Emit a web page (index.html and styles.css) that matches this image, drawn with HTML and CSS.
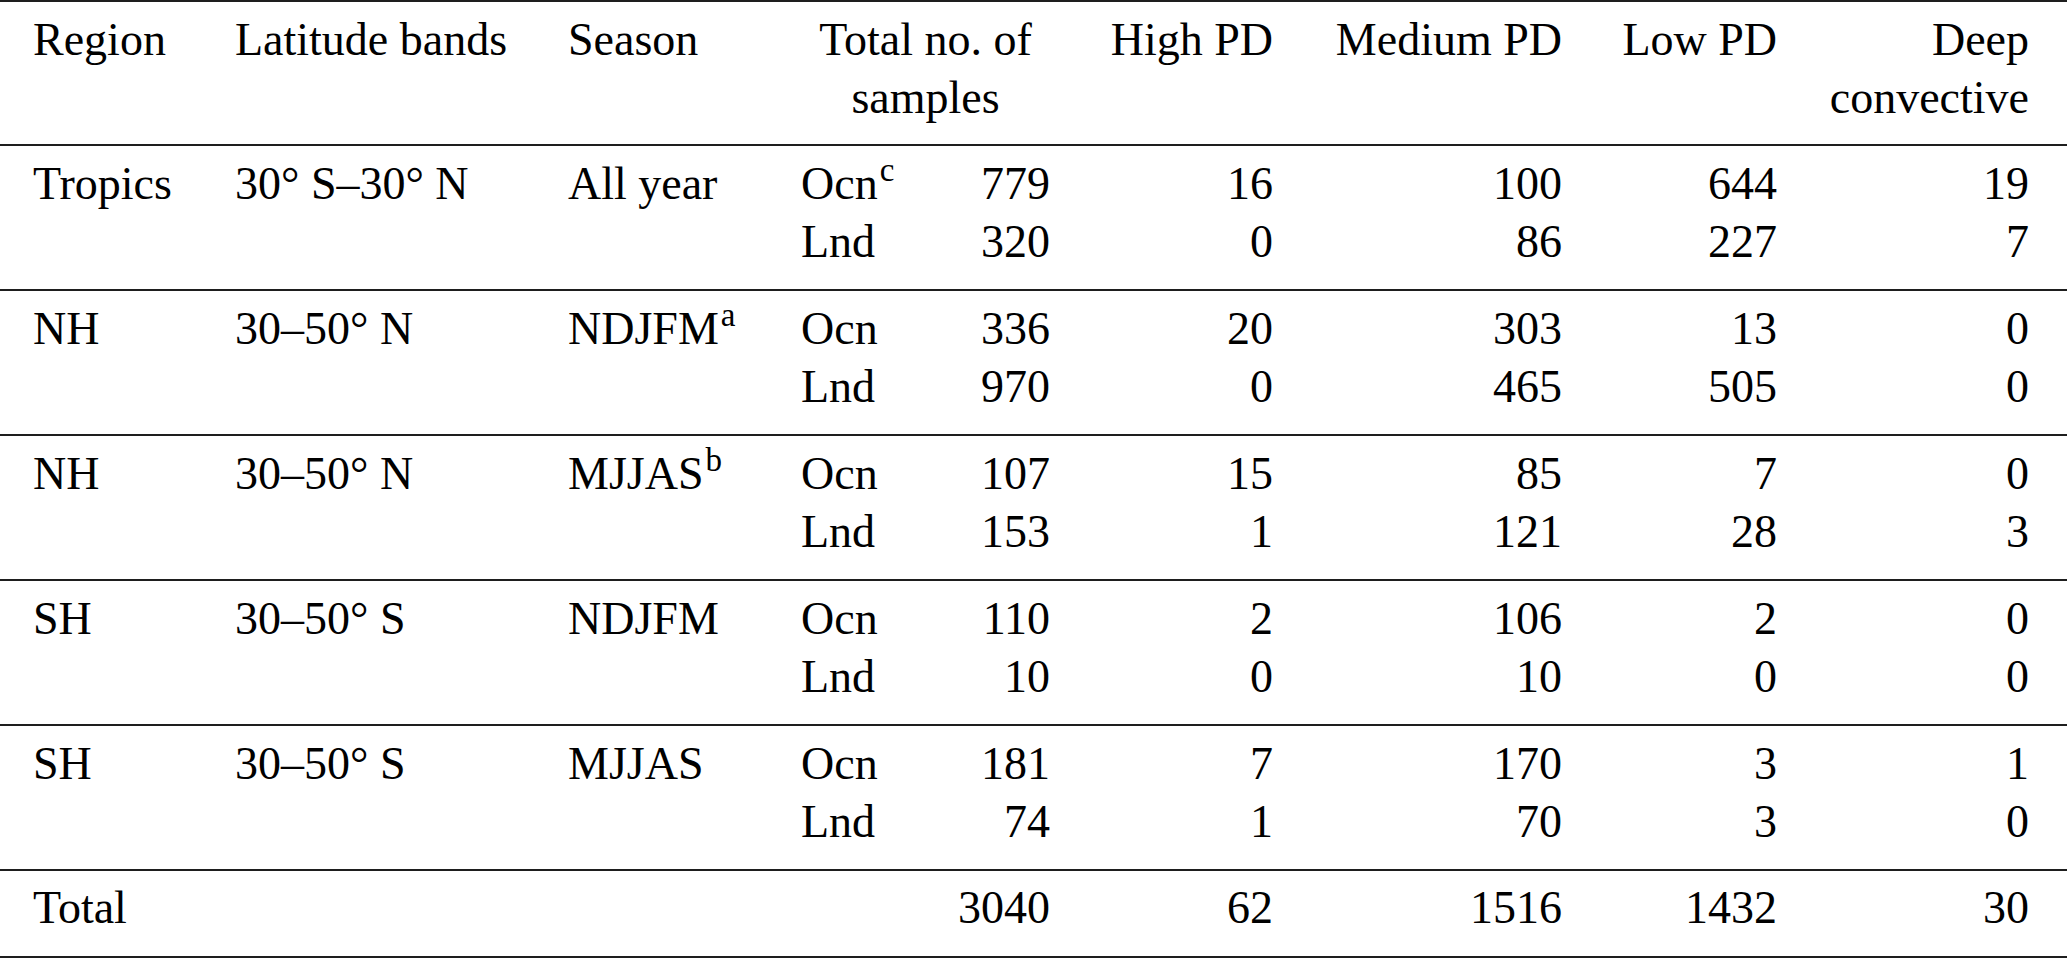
FILE: index.html
```html
<!DOCTYPE html>
<html lang="en">
<head>
<meta charset="utf-8">
<title>Table</title>
<link rel="stylesheet" href="styles.css">
</head>
<body>
<div class="table">
  <div class="group head">
    <div class="cell first">Region</div>
    <div class="cell">Latitude bands</div>
    <div class="cell">Season</div>
    <div class="cell span2 center">Total no. of<br>samples</div>
    <div class="cell num">High PD</div>
    <div class="cell num">Medium PD</div>
    <div class="cell num">Low PD</div>
    <div class="cell num last">Deep<br>convective</div>
  </div>

  <div class="group">
    <div class="cell first">Tropics</div>
    <div class="cell">30° S–30° N</div>
    <div class="cell">All year</div>
    <div class="cell">Ocn<span class="sup">c</span></div>
    <div class="cell num">779</div>
    <div class="cell num">16</div>
    <div class="cell num">100</div>
    <div class="cell num">644</div>
    <div class="cell num last">19</div>
    <div class="cell first"></div>
    <div class="cell"></div>
    <div class="cell"></div>
    <div class="cell">Lnd</div>
    <div class="cell num">320</div>
    <div class="cell num">0</div>
    <div class="cell num">86</div>
    <div class="cell num">227</div>
    <div class="cell num last">7</div>
  </div>

  <div class="group">
    <div class="cell first">NH</div>
    <div class="cell">30–50° N</div>
    <div class="cell">NDJFM<span class="sup">a</span></div>
    <div class="cell">Ocn</div>
    <div class="cell num">336</div>
    <div class="cell num">20</div>
    <div class="cell num">303</div>
    <div class="cell num">13</div>
    <div class="cell num last">0</div>
    <div class="cell first"></div>
    <div class="cell"></div>
    <div class="cell"></div>
    <div class="cell">Lnd</div>
    <div class="cell num">970</div>
    <div class="cell num">0</div>
    <div class="cell num">465</div>
    <div class="cell num">505</div>
    <div class="cell num last">0</div>
  </div>

  <div class="group">
    <div class="cell first">NH</div>
    <div class="cell">30–50° N</div>
    <div class="cell">MJJAS<span class="sup">b</span></div>
    <div class="cell">Ocn</div>
    <div class="cell num">107</div>
    <div class="cell num">15</div>
    <div class="cell num">85</div>
    <div class="cell num">7</div>
    <div class="cell num last">0</div>
    <div class="cell first"></div>
    <div class="cell"></div>
    <div class="cell"></div>
    <div class="cell">Lnd</div>
    <div class="cell num">153</div>
    <div class="cell num">1</div>
    <div class="cell num">121</div>
    <div class="cell num">28</div>
    <div class="cell num last">3</div>
  </div>

  <div class="group">
    <div class="cell first">SH</div>
    <div class="cell">30–50° S</div>
    <div class="cell">NDJFM</div>
    <div class="cell">Ocn</div>
    <div class="cell num">110</div>
    <div class="cell num">2</div>
    <div class="cell num">106</div>
    <div class="cell num">2</div>
    <div class="cell num last">0</div>
    <div class="cell first"></div>
    <div class="cell"></div>
    <div class="cell"></div>
    <div class="cell">Lnd</div>
    <div class="cell num">10</div>
    <div class="cell num">0</div>
    <div class="cell num">10</div>
    <div class="cell num">0</div>
    <div class="cell num last">0</div>
  </div>

  <div class="group">
    <div class="cell first">SH</div>
    <div class="cell">30–50° S</div>
    <div class="cell">MJJAS</div>
    <div class="cell">Ocn</div>
    <div class="cell num">181</div>
    <div class="cell num">7</div>
    <div class="cell num">170</div>
    <div class="cell num">3</div>
    <div class="cell num last">1</div>
    <div class="cell first"></div>
    <div class="cell"></div>
    <div class="cell"></div>
    <div class="cell">Lnd</div>
    <div class="cell num">74</div>
    <div class="cell num">1</div>
    <div class="cell num">70</div>
    <div class="cell num">3</div>
    <div class="cell num last">0</div>
  </div>

  <div class="group total">
    <div class="cell first">Total</div>
    <div class="cell"></div>
    <div class="cell"></div>
    <div class="cell"></div>
    <div class="cell num">3040</div>
    <div class="cell num">62</div>
    <div class="cell num">1516</div>
    <div class="cell num">1432</div>
    <div class="cell num last">30</div>
  </div>
</div>
</body>
</html>
```

FILE: styles.css
```css
html, body {
  margin: 0;
  padding: 0;
  background: #ffffff;
}

.table {
  width: 2067px;
  border-top: 2px solid #1e1e1e;
  font-family: "Liberation Serif", "Times New Roman", serif;
  font-size: 46px;
  line-height: 58px;
  color: #000000;
}

.group {
  display: grid;
  grid-template-columns: 235px 333px 233px 129px 120px 223px 289px 215px 290px;
  padding: 9px 0 18px;
  border-bottom: 2px solid #1e1e1e;
}

.group.head {
  padding: 9px 0 17px;
}

.group.total {
  padding: 8px 0 19px;
}

.cell {
  white-space: nowrap;
  min-height: 58px;
}

.cell.first {
  padding-left: 33px;
}

.cell.num {
  text-align: right;
}

.cell.last {
  padding-right: 38px;
}

.cell.span2 {
  grid-column: span 2;
}

.cell.center {
  text-align: center;
}

.sup {
  font-size: 33px;
  line-height: 0;
  vertical-align: 18px;
  margin-left: 2px;
}
```
